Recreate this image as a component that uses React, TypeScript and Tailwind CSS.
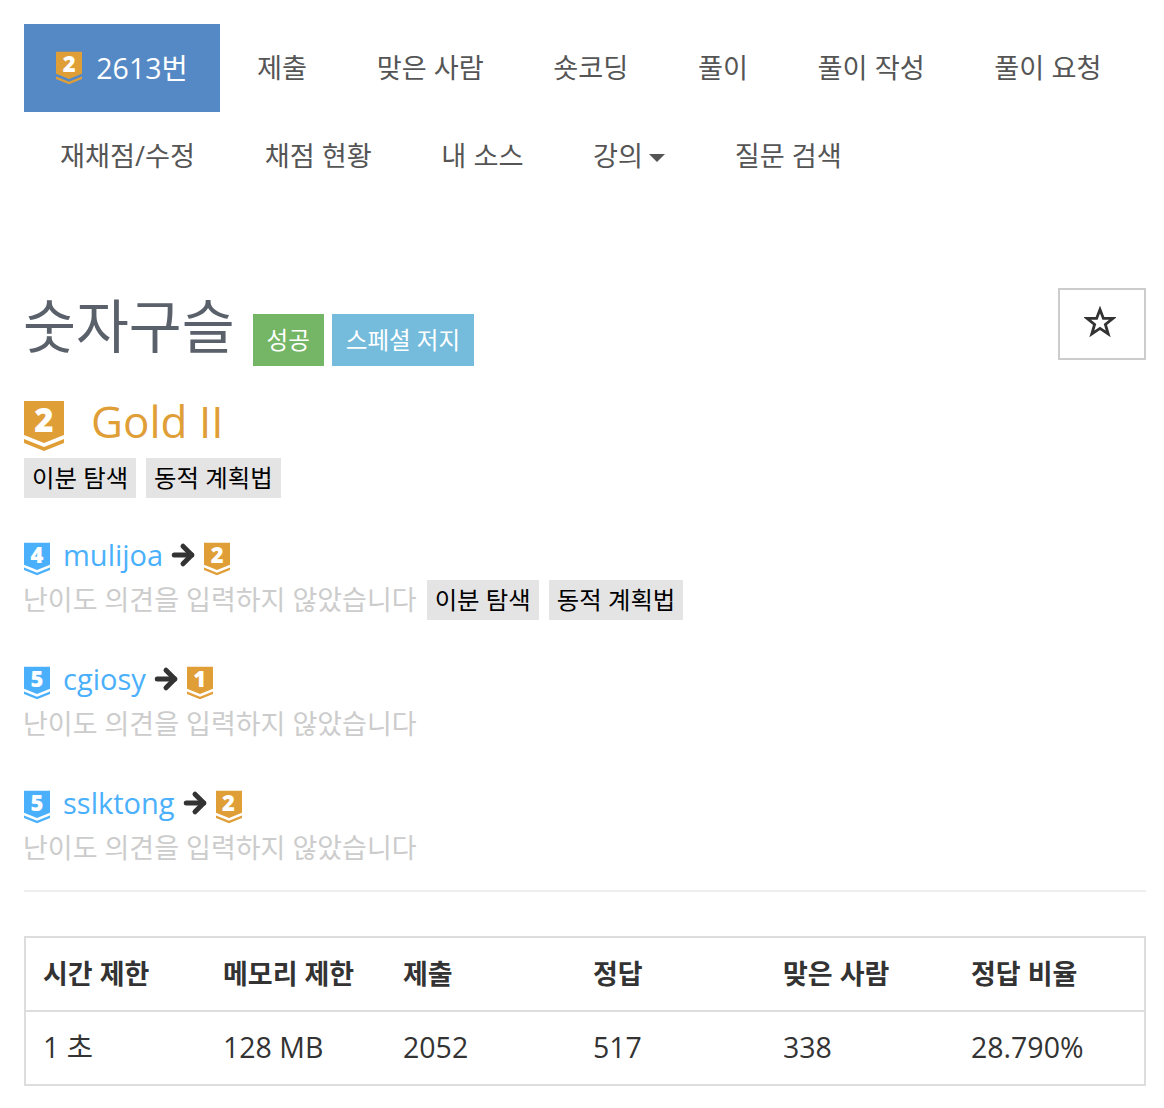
import { ArrowRight } from 'lucide-react';

const BLUE = '#4bb0fc';
const GOLD = '#e09e37';

function Tier({ n, color, big, className = '' }: { n: number; color: string; big?: boolean; className?: string }) {
  return (
    <span className={`relative block shrink-0 ${big ? 'h-[50px] w-10' : 'h-[34px] w-[26px]'} ${className}`}>
      <svg viewBox="0 0 40 50" className="h-full w-full" aria-hidden="true">
        <path d="M0 0H40V34L20 42L0 34Z" fill={color} />
        <path d="M0 38L20 46L40 38V42L20 50L0 42Z" fill={color} />
      </svg>
      <span
        className={`absolute inset-x-0 top-0 text-center font-extrabold text-white ${
          big ? 'text-[33px] leading-[38px]' : 'text-[22px] leading-[25px]'
        }`}
      >
        {n}
      </span>
    </span>
  );
}

function Tag({ children }: { children: string }) {
  return <span className="inline-block h-10 whitespace-nowrap bg-[#e4e4e4] px-2 pt-px text-[24.4px] leading-[38px] text-black">{children}</span>;
}

function Opinion({ name, from, to, tags }: { name: string; from: number; to: number; tags?: string[] }) {
  return (
    <div className="mb-[43px]">
      <div className="flex h-[41px] items-center">
        <Tier n={from} color={BLUE} className="mb-[2px]" />
        <span className="ml-[13px] pb-[10px] text-[29px] leading-10 text-[#4bb0fc]">{name}</span>
        <ArrowRight size={30} strokeWidth={4} className="mb-[10px] ml-[5px] text-[#333]" />
        <Tier n={to} color={GOLD} className="mb-[2px] ml-[6px]" />
      </div>
      <div className="flex h-10 items-center gap-[10px]">
        <span className="-ml-px whitespace-nowrap text-[27px] leading-10 text-[#ccc]">난이도 의견을 입력하지 않았습니다</span>
        {tags?.map((t) => <Tag key={t}>{t}</Tag>)}
      </div>
    </div>
  );
}

const topNav = ['제출', '맞은 사람', '숏코딩', '풀이', '풀이 작성', '풀이 요청'];
const subNav = ['재채점/수정', '채점 현황', '내 소스'];
const heads = ['시간 제한', '메모리 제한', '제출', '정답', '맞은 사람', '정답 비율'];
const vals = ['1 초', '128 MB', '2052', '517', '338', '28.790%'];
const colW = ['w-[180px]', 'w-[180px]', 'w-[190px]', 'w-[190px]', 'w-[188px]', ''];

export default function App() {
  return (
    <div className="h-[1108px] overflow-hidden bg-white pl-6 pr-[18px] pt-6 text-[#333] [font-family:'Open_Sans','Noto_Sans_CJK_KR',sans-serif]">
      <nav className="text-[27.2px] leading-10 text-[#555]">
        <ul className="flex">
          <li className="flex h-[88px] w-[196px] shrink-0 items-center justify-center gap-[14px] whitespace-nowrap bg-[#5589c5] text-white">
            <Tier n={2} color={GOLD} />
            <span className="text-[28.5px]">2613번</span>
          </li>
          {topNav.map((t, i) => (
            <li key={t} className={`whitespace-nowrap py-6 pr-[34.8px] ${i === 0 ? 'pl-[37px]' : 'pl-[34.8px]'}`}>{t}</li>
          ))}
        </ul>
        <ul className="flex">
          {subNav.map((t, i) => (
            <li key={t} className={`whitespace-nowrap py-6 pr-[34.8px] ${i === 0 ? 'pl-[36px]' : 'pl-[34.8px]'}`}>{t}</li>
          ))}
          <li className="flex items-center px-[34.8px] py-6">
            강의
            <span className="ml-[6px] mt-1 border-x-[8px] border-t-[8px] border-x-transparent border-t-[#555]" />
          </li>
          <li className="whitespace-nowrap px-[34.8px] py-6">질문 검색</li>
        </ul>
      </nav>

      <div className="mt-[88px] flex items-start justify-between">
        <div className="flex items-end">
          <h1 className="-ml-px whitespace-nowrap pb-[7px] pt-[5px] text-[57.5px] leading-[66px] text-[#5a616b]">숫자구슬</h1>
          <span className="ml-[18px] h-[52px] bg-[#74b566] px-[14px] text-[23.5px] leading-[52px] text-white">성공</span>
          <span className="ml-2 h-[52px] whitespace-nowrap bg-[#74bbdc] px-[14px] text-[23.5px] leading-[52px] text-white">스페셜 저지</span>
        </div>
        <button className="flex h-[72px] w-[88px] items-center justify-center border-2 border-[#ccc] bg-white">
          <svg viewBox="0 0 32 32" className="mb-1 mr-1 h-8 w-8" fill="none" stroke="#333" strokeWidth="2.8" aria-hidden="true">
            <path d="M16 3.5L19.4 12.4H29L21.4 18.4L24.2 28L16 22.4L7.8 28L10.6 18.4L3 12.4H12.6Z" />
          </svg>
        </button>
      </div>

      <div className="mt-[35px] flex h-[50px] items-start">
        <Tier n={2} color={GOLD} big />
        <span className="ml-[27px] text-[44px] leading-10 text-[#e09e37]">Gold II</span>
      </div>
      <div className="mb-[41px] mt-[7px] flex gap-[10px]">
        <Tag>이분 탐색</Tag>
        <Tag>동적 계획법</Tag>
      </div>

      <Opinion name="mulijoa" from={4} to={2} tags={['이분 탐색', '동적 계획법']} />
      <Opinion name="cgiosy" from={5} to={1} />
      <Opinion name="sslktong" from={5} to={2} />

      <hr className="-mt-[21px] border-t-2 border-[#eee]" />

      <table className="mt-[44px] w-full table-fixed border-2 border-[#ddd] leading-10">
        <thead>
          <tr className="border-b-2 border-[#ddd]">
            {heads.map((h, i) => (
              <th key={h} className={`${colW[i]} h-[74px] whitespace-nowrap text-left text-[27px] font-bold ${i === 0 ? 'pl-[17px]' : 'pl-[18px]'}`}>{h}</th>
            ))}
          </tr>
        </thead>
        <tbody>
          <tr>
            {vals.map((v, i) => (
              <td key={v} className={`h-[74px] pb-[2px] text-[28.5px] ${i === 0 ? 'pl-[17px]' : 'pl-[18px]'}`}>{v}</td>
            ))}
          </tr>
        </tbody>
      </table>
    </div>
  );
}
